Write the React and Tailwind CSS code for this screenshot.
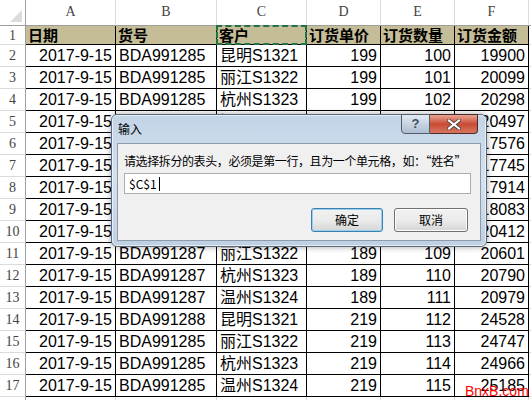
import React from 'react';

const colW = ['w-[90px]', 'w-[101px]', 'w-[90px]', 'w-[74px]', 'w-[74px]', 'w-[74px]'];
const align = ['justify-end', 'justify-start', 'justify-start', 'justify-end', 'justify-end', 'justify-end'];
const letters = ['A', 'B', 'C', 'D', 'E', 'F'];

const head = ['日期', '货号', '客户', '订货单价', '订货数量', '订货金额'];

const rows = [
  ['BDA991285', '昆明S1321', 199, 100, 19900],
  ['BDA991285', '丽江S1322', 199, 101, 20099],
  ['BDA991285', '杭州S1323', 199, 102, 20298],
  ['BDA991285', '温州S1324', 199, 103, 20497],
  ['BDA991286', '昆明S1321', 169, 104, 17576],
  ['BDA991286', '丽江S1322', 169, 105, 17745],
  ['BDA991286', '杭州S1323', 169, 106, 17914],
  ['BDA991286', '温州S1324', 169, 107, 18083],
  ['BDA991287', '昆明S1321', 189, 108, 20412],
  ['BDA991287', '丽江S1322', 189, 109, 20601],
  ['BDA991287', '杭州S1323', 189, 110, 20790],
  ['BDA991287', '温州S1324', 189, 111, 20979],
  ['BDA991288', '昆明S1321', 219, 112, 24528],
  ['BDA991285', '丽江S1322', 219, 113, 24747],
  ['BDA991285', '杭州S1323', 219, 114, 24966],
  ['BDA991285', '温州S1324', 219, 115, 25185],
];

const cellFont = "font-['Liberation_Sans','Noto_Sans_CJK_SC',sans-serif]";
const headFont = "font-['Liberation_Serif','DejaVu_Serif',serif]";

function RowHead({ n, h }) {
  return (
    <div className={`w-[26px] ${h} shrink-0 flex items-center justify-center border-r border-b border-r-[#9e9e9e] border-b-[#dadada] text-[14px] text-[#444] ${headFont}`}>
      {n}
    </div>
  );
}

export default function App() {
  return (
    <div className="relative w-[531px] h-[400px] overflow-hidden bg-white">
      {/* column letters */}
      <div className="flex h-[26px]">
        <div className="w-[26px] shrink-0 relative border-r border-b border-r-[#9e9e9e] border-b-[#9e9e9e]">
          <div className="absolute right-[3px] bottom-[3px] w-0 h-0 border-l-[12px] border-l-transparent border-b-[12px] border-b-[#dcdcdc]" />
        </div>
        {letters.map((l, i) => (
          <div key={l} className={`${colW[i]} shrink-0 flex items-end justify-center pb-[3px] border-r border-b border-r-[#dadada] border-b-[#9e9e9e] text-[14px] text-[#444] ${headFont}`}>
            {l}
          </div>
        ))}
        <div className="flex-1 border-b border-b-[#9e9e9e]" />
      </div>

      {/* row 1 */}
      <div className="flex h-[19px]">
        <RowHead n={1} h="h-[19px]" />
        {head.map((t, i) => (
          <div key={t} className={`${colW[i]} shrink-0 relative flex items-center px-[2px] bg-[#c4bd97] border-r border-b border-black text-[15px] font-bold text-black leading-none ${cellFont}`}>
            {t}
            {i === 2 && (
              <div className="absolute left-[-1px] top-[-1px] right-[-1px] bottom-[-1px] border-2 border-dashed border-[#217346]" />
            )}
          </div>
        ))}
        <div className="flex-1 border-b border-[#dadada]" />
      </div>

      {/* data rows */}
      {rows.map((r, idx) => {
        const vals = ['2017-9-15', ...r];
        return (
          <div key={idx} className="flex h-[22px]">
            <RowHead n={idx + 2} h="h-[22px]" />
            {vals.map((v, i) => (
              <div key={i} className={`${colW[i]} shrink-0 flex items-center ${align[i]} px-[3px] border-r border-b border-black text-[16px] text-black leading-none whitespace-nowrap overflow-hidden ${cellFont}`}>
                {v}
              </div>
            ))}
            <div className="flex-1 border-b border-[#dadada]" />
          </div>
        );
      })}
      <div className="flex h-[22px]">
        <div className="w-[26px] h-[22px] shrink-0 border-r border-r-[#9e9e9e]" />
        {colW.map((w, i) => (
          <div key={i} className={`${w} shrink-0 h-[22px] border-r border-[#dadada]`} />
        ))}
      </div>

      {/* watermark */}
      <div className="absolute left-[465px] top-[384px] text-[14px] text-[#ff0000] font-['Liberation_Sans',sans-serif] leading-none">
        BnxB.com
      </div>

      {/* dialog */}
      <div className="absolute left-[111px] top-[114px] w-[376px] h-[133px] rounded-[6px] border border-[#5b6b7c] bg-gradient-to-b from-[#c3d4e7] via-[#d4e1ef] to-[#bfd0e3] shadow-[0_0_6px_rgba(0,0,0,0.35)]">
        <div className="absolute inset-0 rounded-[5px] border border-white/60" />
        <div className="absolute left-[6px] top-[8px] text-[12px] text-black leading-none font-['Noto_Sans_CJK_SC',sans-serif]">
          输入
        </div>
        {/* caption buttons */}
        <div className="absolute left-[289px] top-[-1px] flex">
          <div className="w-[29px] h-[20px] rounded-bl-[4px] border border-[#4f5d6c] bg-gradient-to-b from-[#e3ebf4] via-[#c6d3e1] to-[#aebed1] flex items-center justify-center text-[13px] font-bold text-[#40505f] font-['Liberation_Sans',sans-serif]">
            ?
          </div>
          <div className="w-[48px] h-[20px] rounded-br-[4px] border border-l-0 border-[#4a2a2a] bg-gradient-to-b from-[#e8a493] via-[#c94a35] to-[#d7765e] flex items-center justify-center">
            <svg width="14" height="11" viewBox="0 0 14 11">
              <path d="M2 1.5 L12 9.5 M12 1.5 L2 9.5" stroke="#3a3a3a" strokeWidth="3.6" strokeLinecap="square" />
              <path d="M2 1.5 L12 9.5 M12 1.5 L2 9.5" stroke="#ffffff" strokeWidth="2.2" strokeLinecap="square" />
            </svg>
          </div>
        </div>
        {/* client area */}
        <div className="absolute left-[5px] top-[28px] w-[364px] h-[98px] border border-[#8d9cad] bg-[#f0f0f0] px-[6px] pt-[9px] font-['Noto_Sans_CJK_SC',sans-serif]">
          <div className="text-[12px] leading-[16px] text-black whitespace-nowrap tracking-[-0.4px]">
            请选择拆分的表头，必须是第一行，且为一个单元格，如：“姓名”
          </div>
          <div className="mt-[4px] w-[347px] h-[21px] border border-[#abadb3] bg-white flex items-center pl-[4px] text-[12px] text-black">
            <span>$C$1</span>
            <span className="ml-[2px] w-px h-[14px] bg-black" />
          </div>
          <div className="mt-[14px] flex justify-end gap-[11px] pr-[6px]">
            <div className="w-[72px] h-[24px] rounded-[3px] border border-[#3c7fb1] shadow-[inset_0_0_0_1px_#98d1ef] bg-gradient-to-b from-[#f2f2f2] via-[#ebebeb] to-[#d6d6d6] flex items-center justify-center text-[12px] text-black">
              确定
            </div>
            <div className="w-[74px] h-[24px] rounded-[3px] border border-[#707070] shadow-[inset_0_0_0_1px_#fcfcfc] bg-gradient-to-b from-[#f2f2f2] via-[#ebebeb] to-[#d6d6d6] flex items-center justify-center text-[12px] text-black">
              取消
            </div>
          </div>
        </div>
      </div>
    </div>
  );
}
